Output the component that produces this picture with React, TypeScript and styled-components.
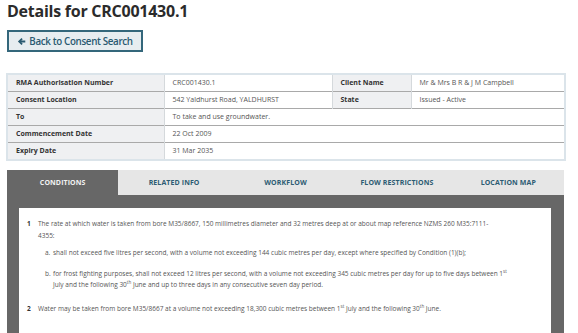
import React from 'react';
import styled, { createGlobalStyle } from 'styled-components';

const GlobalStyle = createGlobalStyle`
  html, body {
    margin: 0;
    padding: 0;
    background: #ffffff;
    font-family: 'Open Sans', 'Liberation Sans', sans-serif;
    overflow: hidden;
  }
`;

const Page = styled.div`
  display: flex;
  flex-direction: column;
  align-items: flex-start;
  padding: 0 13px 0 7px;
  width: 578px;
  height: 333px;
  box-sizing: border-box;
`;

const Title = styled.h1`
  margin: 0;
  font-size: 16px;
  line-height: 23px;
  font-weight: 700;
  letter-spacing: -0.25px;
  color: #2b2b2b;
`;

const BackButton = styled.button`
  margin-top: 7px;
  height: 22px;
  width: 136px;
  display: flex;
  align-items: center;
  justify-content: center;
  gap: 3px;
  background: #e7edf0;
  border: 2px solid #34677b;
  color: #2a5a70;
  font-family: 'Open Sans', 'Liberation Sans', sans-serif;
  font-size: 9.8px;
  font-weight: 600;
  letter-spacing: -0.35px;
  padding: 0;
  cursor: pointer;
`;

const Arrow = styled.svg`
  width: 9px;
  height: 9px;
  flex: none;
`;

const Table = styled.table`
  margin-top: 21px;
  margin-left: -1px;
  width: 560px;
  border-collapse: collapse;
  border: 2px solid #dbe4ea;
  table-layout: fixed;
`;

const Row = styled.tr`
  height: 16.6px;
  border-bottom: 1px solid #a9a9a9;
  &:last-child {
    border-bottom: none;
  }
`;

const Cell = styled.td<{ $label?: boolean }>`
  padding: 0 0 0 8px;
  font-size: 7px;
  line-height: 16px;
  font-weight: ${p => (p.$label ? 700 : 400)};
  color: ${p => (p.$label ? '#333333' : '#555555')};
  background: ${p => (p.$label ? '#eff0f2' : '#ffffff')};
  border-right: 1px solid #d5d9dc;
  white-space: nowrap;
  overflow: hidden;
`;

const TabPanel = styled.div`
  margin-top: 9px;
  width: 557px;
  flex: 1;
  min-height: 0;
  background: #676767;
  display: flex;
  flex-direction: column;
`;

const TabStrip = styled.div`
  display: grid;
  grid-template-columns: repeat(5, 1fr);
  height: 25px;
  flex: none;
  background: #e6e6e6;
`;

const Tab = styled.div<{ $active?: boolean }>`
  display: flex;
  align-items: center;
  justify-content: center;
  font-size: 7px;
  font-weight: 700;
  letter-spacing: 0.1px;
  color: ${p => (p.$active ? '#f2f2f2' : '#2d5c73')};
  background: ${p => (p.$active ? '#676767' : 'transparent')};
`;

const Content = styled.div`
  margin: 13px 13px 0 12px;
  flex: 1;
  min-height: 0;
  overflow: hidden;
  background: #ffffff;
  padding: 10px 0 0 8px;
  box-sizing: border-box;
`;

const Condition = styled.div<{ $gap?: number }>`
  display: flex;
  gap: 6px;
  margin-top: ${p => p.$gap ?? 0}px;
`;

const Num = styled.div`
  width: 5px;
  font-size: 6.5px;
  line-height: 11.5px;
  font-weight: 700;
  color: #333333;
`;

const Body = styled.div`
  flex: 1;
  font-size: 6.5px;
  line-height: 11.5px;
  color: #555555;
`;

const SubItem = styled.div<{ $gap: number }>`
  display: flex;
  margin-top: ${p => p.$gap}px;
  padding-left: 7px;
`;

const SubMark = styled.span`
  width: 8px;
  flex: none;
`;

const Sup = styled.sup`
  font-size: 4.5px;
  line-height: 0;
  vertical-align: 3px;
`;

export default function App() {
  return (
    <>
      <GlobalStyle />
      <Page>
        <Title>Details for CRC001430.1</Title>
        <BackButton>
          <Arrow viewBox="0 0 10 10">
            <path d="M5 1 L1 5 L5 9 L6.4 7.6 L4.7 6 H9.2 V4 H4.7 L6.4 2.4 Z" fill="#2a5a70" />
          </Arrow>
          Back to Consent Search
        </BackButton>

        <Table>
          <colgroup>
            <col style={{ width: '157px' }} />
            <col style={{ width: '168px' }} />
            <col style={{ width: '79px' }} />
            <col />
          </colgroup>
          <tbody>
            <Row>
              <Cell $label>RMA Authorisation Number</Cell>
              <Cell>CRC001430.1</Cell>
              <Cell $label>Client Name</Cell>
              <Cell>Mr &amp; Mrs B R &amp; J M Campbell</Cell>
            </Row>
            <Row>
              <Cell $label>Consent Location</Cell>
              <Cell>542 Yaldhurst Road, YALDHURST</Cell>
              <Cell $label>State</Cell>
              <Cell>Issued - Active</Cell>
            </Row>
            <Row>
              <Cell $label>To</Cell>
              <Cell colSpan={3}>To take and use groundwater.</Cell>
            </Row>
            <Row>
              <Cell $label>Commencement Date</Cell>
              <Cell colSpan={3}>22 Oct 2009</Cell>
            </Row>
            <Row>
              <Cell $label>Expiry Date</Cell>
              <Cell colSpan={3}>31 Mar 2035</Cell>
            </Row>
          </tbody>
        </Table>

        <TabPanel>
          <TabStrip>
            <Tab $active>CONDITIONS</Tab>
            <Tab>RELATED INFO</Tab>
            <Tab>WORKFLOW</Tab>
            <Tab>FLOW RESTRICTIONS</Tab>
            <Tab>LOCATION MAP</Tab>
          </TabStrip>
          <Content>
            <Condition>
              <Num>1</Num>
              <Body>
                The rate at which water is taken from bore M35/8667, 150 millimetres diameter and 32 metres deep at or about map reference NZMS 260 M35:7111-
                <br />
                4355:
                <SubItem $gap={6}>
                  <SubMark>a.</SubMark>
                  <span>shall not exceed five litres per second, with a volume not exceeding 144 cubic metres per day, except where specified by Condition (1)(b);</span>
                </SubItem>
                <SubItem $gap={9}>
                  <SubMark>b.</SubMark>
                  <span>
                    for frost fighting purposes, shall not exceed 12 litres per second, with a volume not exceeding 345 cubic metres per day for up to five days between 1<Sup>st</Sup>
                    <br />
                    July and the following 30<Sup>th</Sup> June and up to three days in any consecutive seven day period.
                  </span>
                </SubItem>
              </Body>
            </Condition>
            <Condition $gap={12}>
              <Num>2</Num>
              <Body>
                Water may be taken from bore M35/8667 at a volume not exceeding 18,300 cubic metres between 1<Sup>st</Sup> July and the following 30<Sup>th</Sup> June.
              </Body>
            </Condition>
          </Content>
        </TabPanel>
      </Page>
    </>
  );
}
